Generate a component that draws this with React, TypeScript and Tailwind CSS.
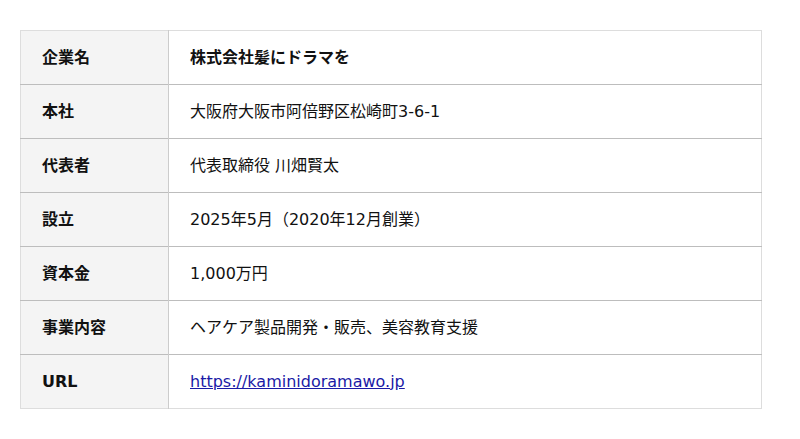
const rows: { label: string; value: React.ReactNode }[] = [
  { label: "企業名", value: <span className="font-bold">株式会社髪にドラマを</span> },
  { label: "本社", value: "大阪府大阪市阿倍野区松崎町3-6-1" },
  { label: "代表者", value: "代表取締役 川畑賢太" },
  { label: "設立", value: "2025年5月（2020年12月創業）" },
  { label: "資本金", value: "1,000万円" },
  { label: "事業内容", value: "ヘアケア製品開発・販売、美容教育支援" },
  {
    label: "URL",
    value: (
      <a href="#" className="text-[#1a1aa6] underline">
        https://kaminidoramawo.jp
      </a>
    ),
  },
];

export default function App() {
  return (
    <div
      className="min-h-[439px] w-[800px] bg-white pt-[30px] pl-[20px] text-[16px] text-[#111]"
      style={{ fontFamily: '"DejaVu Sans", "Noto Sans CJK JP", sans-serif' }}
    >
      <table className="w-[742px] border-collapse border border-[#dddddd]">
        <tbody>
          {rows.map((row, i) => (
            <tr
              key={row.label}
              className={i < rows.length - 1 ? "border-b border-[#bdbdbd]" : ""}
            >
              <th className="h-[54px] w-[148px] border-r border-[#cccccc] bg-[#f4f4f4] pl-[21px] text-left align-middle font-bold">
                {row.label}
              </th>
              <td className="h-[54px] pl-[21px] align-middle">{row.value}</td>
            </tr>
          ))}
        </tbody>
      </table>
    </div>
  );
}
